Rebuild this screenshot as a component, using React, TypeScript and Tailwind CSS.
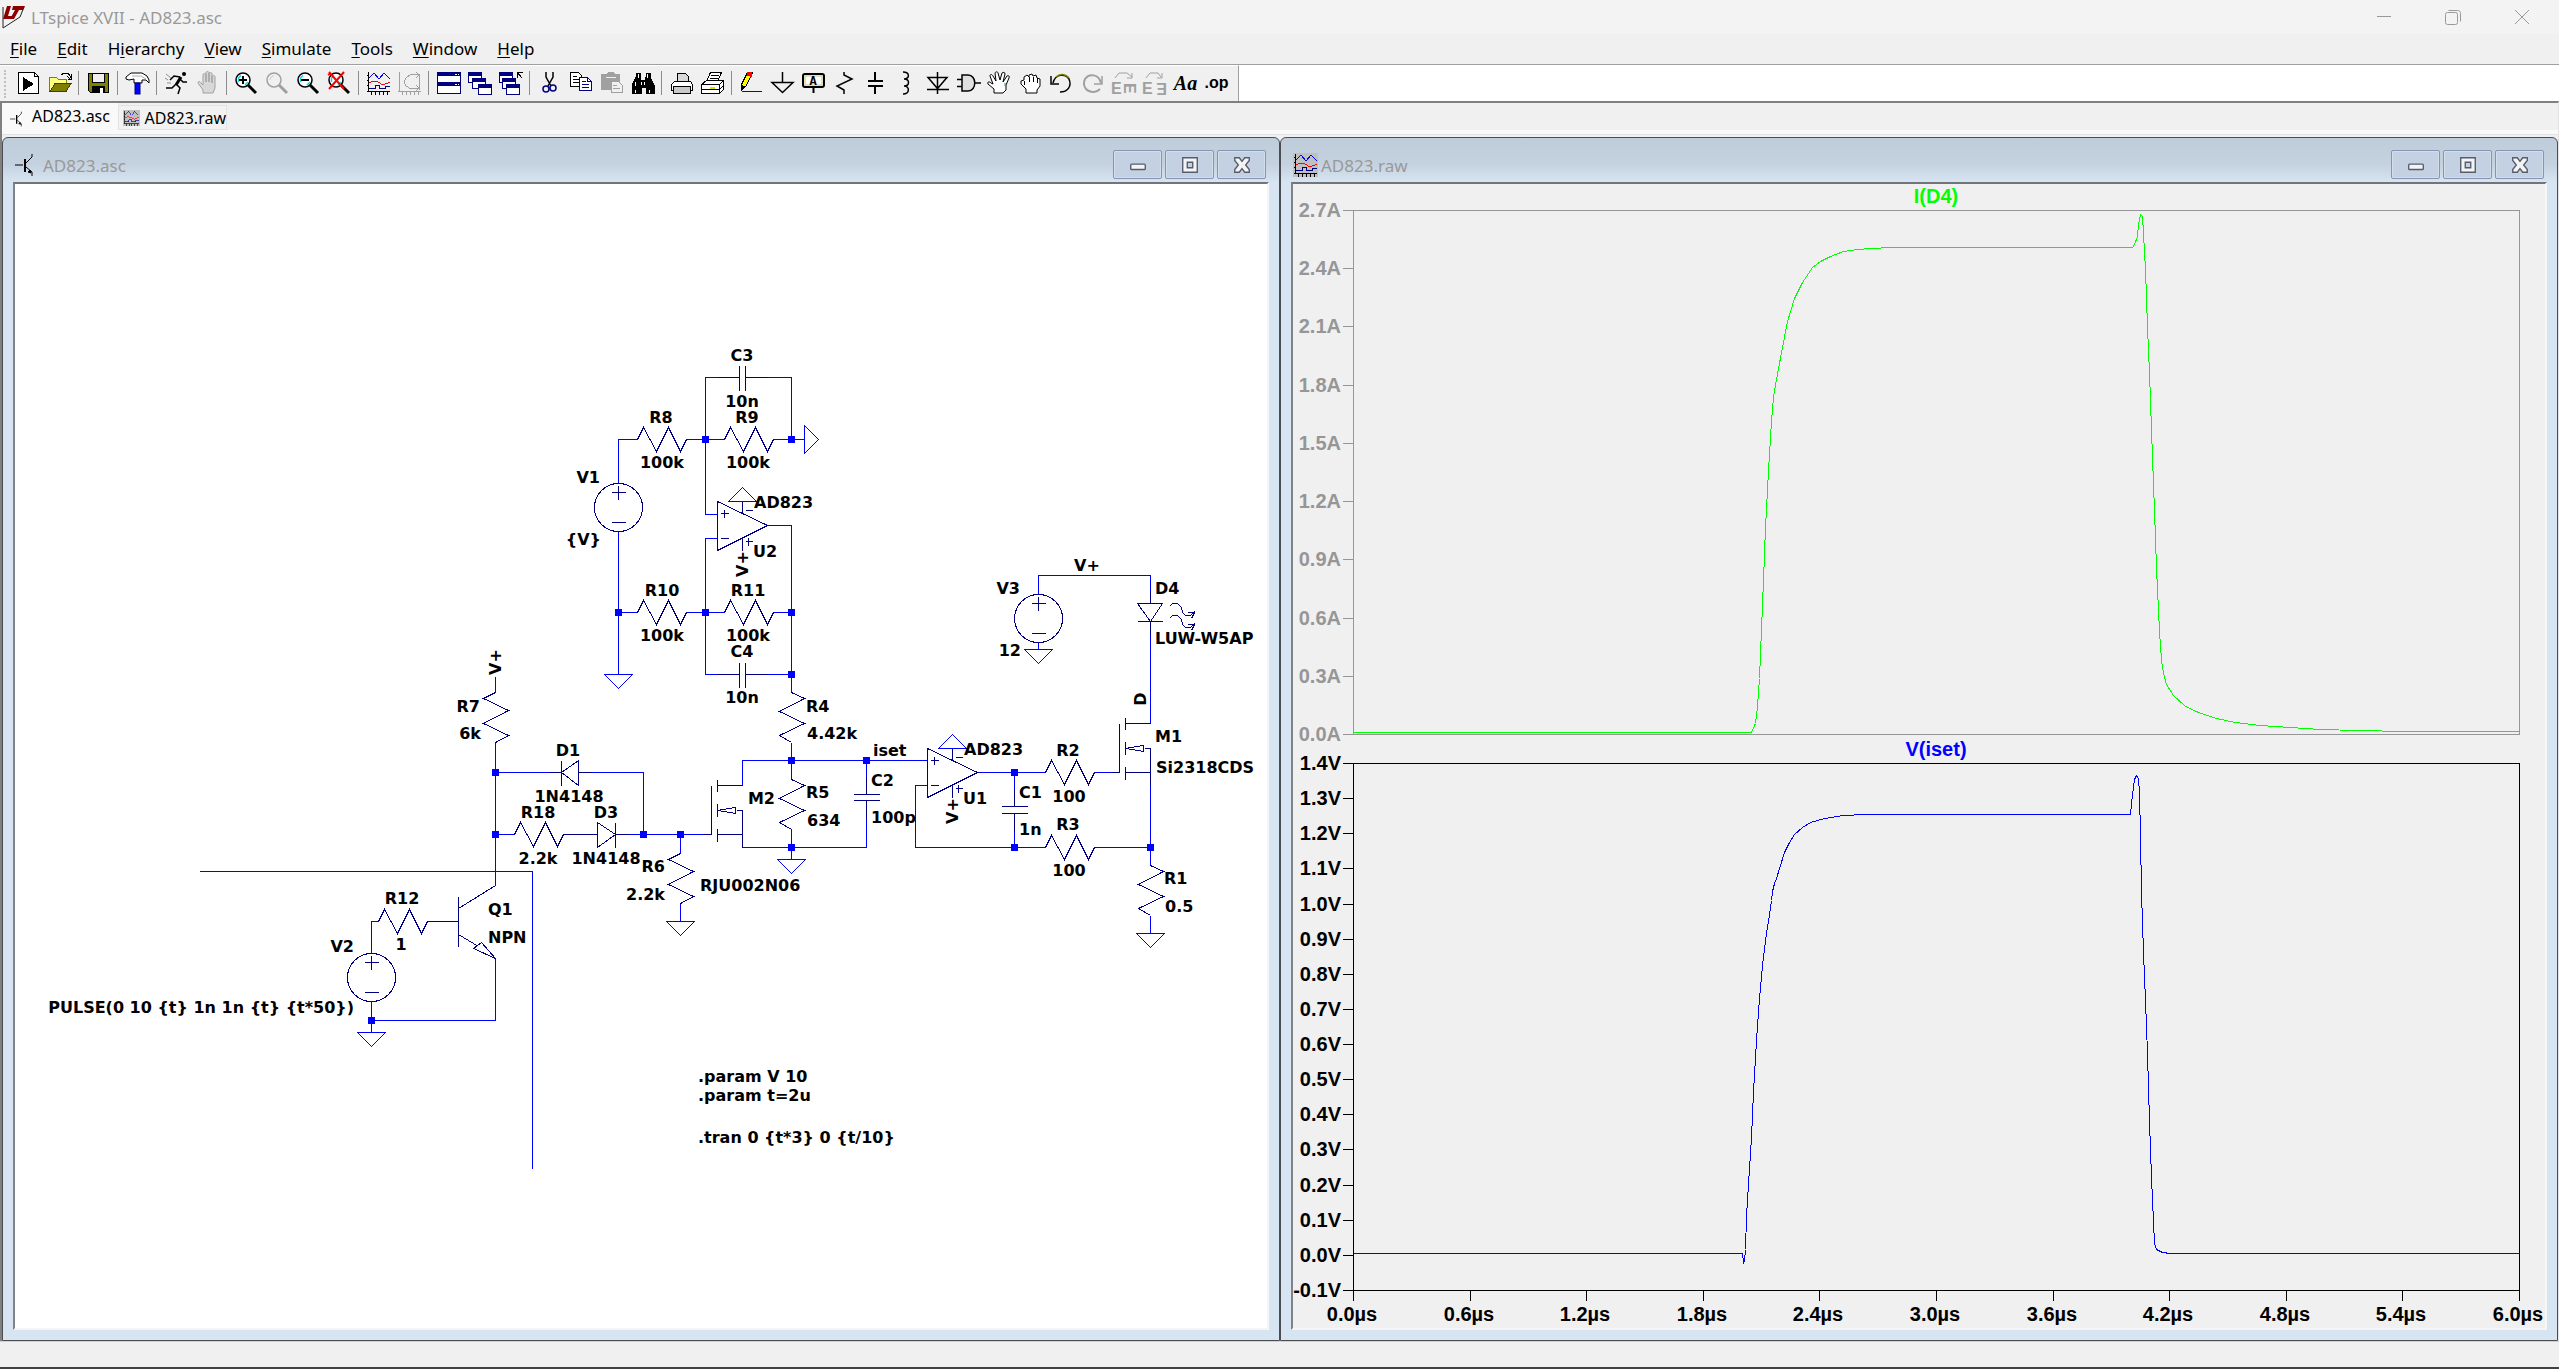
import type { ReactNode } from 'react';

const WIRE = '#0000ff';
const SYMBOL = '#000080';

interface IconProps {
  children: ReactNode;
  smooth?: boolean;
}

const Icon = ({ children, smooth }: IconProps) => (
  <svg
    viewBox="0 0 25 24"
    className="h-6 w-[25px] shrink-0 overflow-visible"
    fill="none"
    stroke="#000"
    shapeRendering={smooth ? 'auto' : 'crispEdges'}
    aria-hidden="true"
  >
    {children}
  </svg>
);

const Magnifier = ({ gray }: { gray?: boolean }) => (
  <>
    <circle cx="9" cy="9" r="7" fill={gray ? '#f0f0f0' : '#fff'} stroke={gray ? '#a0a0a0' : '#000'} strokeWidth="1.5" />
    {!gray && <path d="M4.5 11V7L7 4.5M11 14l3-3" stroke="#00e0e0" strokeWidth="1.5" />}
    {gray && <path d="M5 9c0-3 2-4 4-4" stroke="#c8c8c8" />}
    <path d="M14 14l8 8" stroke={gray ? '#a0a0a0' : '#000'} strokeWidth="3" />
  </>
);

const MiniWindow = ({ x, y }: { x: number; y: number }) => (
  <>
    <rect x={x} y={y} width="13" height="10" fill="#fff" stroke={SYMBOL} />
    <rect x={x} y={y} width="13" height="3" fill={SYMBOL} stroke={SYMBOL} />
  </>
);

const Traces = () => (
  <>
    <path d="M2.5 1v20M1 20.5h23M5.5 21v3M9.5 21v3M13.5 21v3M17.5 21v3M21.5 21v3M1 4.5h2M1 9.5h2M1 14.5h2" />
    <path d="M3 7l5-5 5 6 5-6 6 6" stroke="#0000ff" />
    <path d="M3 12l4-2 5 1 5 3 7-3" stroke="#ff0000" />
    <path d="M3 17.5h6v-3h4v3h6v-2h5" stroke="#000080" />
  </>
);

interface Tool {
  name: string;
  icon: ReactNode;
}

const toolGroups: Tool[][] = [
  [
    {
      name: 'New schematic',
      icon: (
        <Icon>
          <path d="M2.5 1.5h16l4 4v17h-20z" fill="#fff" />
          <path d="M7 6v14l11-7z" fill="#000" stroke="none" />
          <path d="M18.5 1.5v4h4" />
        </Icon>
      ),
    },
    {
      name: 'Open',
      icon: (
        <Icon>
          <path d="M2.5 20.5v-14h7l2 2h8v4" fill="#ffff80" stroke="#808000" />
          <path d="M3 20.5l5-8h16l-5 8z" fill="#808000" stroke="#404000" />
          <path d="M14 4l3-2h4l2 3v2M20 5l3 3M24 3v5h-3" />
        </Icon>
      ),
    },
  ],
  [
    {
      name: 'Save',
      icon: (
        <Icon>
          <path d="M2.5 2.5h20v19h-18l-2-2z" fill="#808000" />
          <rect x="6.5" y="2.5" width="12" height="9" fill="#f0f0f0" />
          <rect x="6" y="15" width="13" height="7" fill="#000" stroke="none" />
          <rect x="14" y="17" width="3" height="5" fill="#fff" stroke="none" />
        </Icon>
      ),
    },
  ],
  [
    {
      name: 'Control panel',
      icon: (
        <Icon smooth>
          <path d="M1 6l5-4h11l5 3 2 4v3l-3-3h-4v3H9V8L4 9 1 8z" fill="#fff" />
          <path d="M7 5h9l5 3" stroke="#b0b0b0" />
          <rect x="10" y="12" width="5" height="11" fill="#0000ff" stroke="#000080" />
        </Icon>
      ),
    },
  ],
  [
    {
      name: 'Run',
      icon: (
        <Icon smooth>
          <circle cx="20" cy="3" r="2" fill="#000" stroke="none" />
          <path d="M17 6l-5 8" strokeWidth="3" />
          <path d="M16 6l-6-1-4 4M16 8l3 3h4M12 13l-4 4H2M12 13l4 4-2 6" strokeWidth="1.5" />
          <path d="M2 3l5 4M1 7l3 2M3 12h4" stroke="#909090" />
        </Icon>
      ),
    },
    {
      name: 'Halt',
      icon: (
        <Icon smooth>
          <path
            d="M8 22v-3l-5-7c0-2 2-2 3 0l2 2V4c0-2 3-2 3 0v7-9c0-2 3-2 3 0v9-8c0-2 3-2 3 0v9-6c0-2 3-2 3 0v11l-2 5z"
            fill="#d8d8d8"
            stroke="#a0a0a0"
          />
        </Icon>
      ),
    },
  ],
  [
    {
      name: 'Zoom in',
      icon: (
        <Icon smooth>
          <Magnifier />
          <path d="M5 9h8M9 5v8" strokeWidth="2" />
        </Icon>
      ),
    },
    {
      name: 'Pan',
      icon: (
        <Icon smooth>
          <Magnifier gray />
        </Icon>
      ),
    },
    {
      name: 'Zoom back',
      icon: (
        <Icon smooth>
          <Magnifier />
          <path d="M5 9h8" strokeWidth="2" />
        </Icon>
      ),
    },
    {
      name: 'Zoom full extents',
      icon: (
        <Icon smooth>
          <Magnifier />
          <path d="M2 1l15 17M17 1L2 18M1 4l3-2" stroke="#ff0000" strokeWidth="2" />
        </Icon>
      ),
    },
  ],
  [
    { name: 'Autorange', icon: <Icon><Traces /></Icon> },
    {
      name: 'Plot settings',
      icon: (
        <Icon>
          <g stroke="#a0a0a0">
            <path d="M2.5 1v20M1 20.5h23M5.5 21v3M9.5 21v3M13.5 21v3M17.5 21v3M21.5 21v3" />
            <path d="M22 4l-8-1-5 4-2 4 2 4 5 3 8-1M19 1l3 3-3 3M19 14l3 3-3 3M22.5 3v16" />
          </g>
        </Icon>
      ),
    },
  ],
  [
    {
      name: 'Tile windows',
      icon: (
        <Icon>
          <rect x="1.5" y="1.5" width="23" height="21" fill="#fff" stroke={SYMBOL} />
          <path d="M1 3h24M1 13h24" stroke={SYMBOL} strokeWidth="4" />
          <path d="M19 3.5h4M19 13.5h4" stroke="#fff" strokeDasharray="2 1" />
        </Icon>
      ),
    },
    {
      name: 'Cascade windows',
      icon: (
        <Icon>
          <MiniWindow x={1} y={1} />
          <MiniWindow x={5} y={7} />
          <MiniWindow x={11} y={13} />
        </Icon>
      ),
    },
    {
      name: 'Close all windows',
      icon: (
        <Icon>
          <MiniWindow x={1} y={1} />
          <MiniWindow x={4} y={7} />
          <MiniWindow x={8} y={13} />
          <path d="M19.5 1.5h5M19.5 1.5v5M19 1l5 6" />
        </Icon>
      ),
    },
  ],
  [
    {
      name: 'Cut',
      icon: (
        <Icon smooth>
          <path d="M9 1v5l5 9M16 1v5l-5 9" strokeWidth="1.5" />
          <circle cx="9" cy="18" r="3" stroke={SYMBOL} strokeWidth="1.5" />
          <circle cx="16" cy="17" r="3" stroke={SYMBOL} strokeWidth="1.5" />
        </Icon>
      ),
    },
    {
      name: 'Copy',
      icon: (
        <Icon>
          <path d="M2.5 1.5h8l3 3v11h-11z" fill="#fff" />
          <path d="M5 5.5h4M5 8.5h6M5 11.5h6" />
          <path d="M11.5 6.5h8l4 4v9h-12z" fill="#fff" stroke={SYMBOL} />
          <path d="M14 10.5h4M14 13.5h7M14 16.5h7M19.5 6.5v4h4" stroke={SYMBOL} />
        </Icon>
      ),
    },
    {
      name: 'Paste',
      icon: (
        <Icon>
          <path d="M2 3h5l2-2h5l2 2h5v16H2z" fill="#a0a0a0" stroke="none" />
          <path d="M7 6h10" stroke="#f0f0f0" />
          <path d="M12.5 10.5h7l4 4v7h-11z" fill="#f0f0f0" stroke="#a0a0a0" />
          <path d="M14 14.5h4M14 17.5h7" stroke="#a0a0a0" />
        </Icon>
      ),
    },
    {
      name: 'Find',
      icon: (
        <Icon>
          <path d="M6 2h4v4l1 3h4l1-3V2h4v4l4 8v8h-8v-6h-5v6H2v-8l4-8z" fill="#000" />
          <path d="M8.5 3v4M17.5 3v4M5.5 11v4M14.5 11v3M5.5 19v3M19.5 19v3M11.5 11v3" stroke="#fff" />
        </Icon>
      ),
    },
  ],
  [
    {
      name: 'Print',
      icon: (
        <Icon>
          <path d="M8.5 2.5h8l3 3v7h-11z" fill="#d8d8d8" />
          <path d="M5.500 10.5h16l2 3v6h-21v-6z" fill="#fff" />
          <path d="M4.5 15.5h17v7h-17z" fill="#c8c8c8" />
        </Icon>
      ),
    },
    {
      name: 'Print setup',
      icon: (
        <Icon>
          <path d="M10.5 1.5h11l-4 9h-11z" fill="#fff" />
          <path d="M11 4.5h8M10 7.5h8" />
          <path d="M1.5 13.5l5-4h17v9l-4 4h-18z" fill="#fff" />
          <path d="M1.5 13.5h18v9M19.5 13.5l4-4M2 18.5h17M20 18l4-4" />
          <path d="M10 16.5h5" stroke="#e0e000" strokeWidth="2" />
        </Icon>
      ),
    },
  ],
  [
    {
      name: 'Wire',
      icon: (
        <Icon>
          <path d="M2.5 18.5v-5l6-12h5l-6 13z" fill="#ffff00" />
          <path d="M2 20v-6l4 2z" fill="#000" />
          <path d="M8.5 1.5h4v4l-4-1z" fill="#ff0000" stroke="#ff0000" />
          <path d="M3 20.5h20" stroke="#0000ff" />
        </Icon>
      ),
    },
    {
      name: 'Ground',
      icon: (
        <Icon smooth>
          <path d="M12.5 1v10M2 11.500h21l-10.5 10z" strokeWidth="1.5" />
        </Icon>
      ),
    },
    {
      name: 'Label net',
      icon: (
        <Icon smooth>
          <rect x="2" y="3" width="21" height="13" rx="2" fill="#fff" strokeWidth="2" />
          <path d="M4 5h17v9H4z" stroke="#c0c080" />
          <path d="M12.5 16v6" strokeWidth="2" />
          <text x="12" y="14" textAnchor="middle" fill="#000" stroke="none" className="font-['Liberation_Mono'] text-[12px] font-bold">
            A
          </text>
        </Icon>
      ),
    },
    {
      name: 'Resistor',
      icon: <Icon smooth><path d="M12 1v3l8 4L5 15l7 4v4" strokeWidth="1.5" /></Icon>,
    },
    {
      name: 'Capacitor',
      icon: <Icon><path d="M12 1v9M12 15v8M5 10h15M5 15h15" strokeWidth="2" /></Icon>,
    },
    {
      name: 'Inductor',
      icon: <Icon smooth><path d="M9 1c7 0 7 7 1 7 6 0 6 7 0 7 6 0 6 8-1 8" strokeWidth="1.5" /></Icon>,
    },
    {
      name: 'Diode',
      icon: <Icon smooth><path d="M12.5 1v22M3 6.5h19l-9.5 11zM2 18.5h22" strokeWidth="1.5" /></Icon>,
    },
    {
      name: 'Component',
      icon: (
        <Icon smooth>
          <path d="M6 4h6c9 0 9 16 0 16H6zM1 8.5h5M1 15.5h5M19 12h6" fill="#e0e0e0" strokeWidth="1.5" />
        </Icon>
      ),
    },
    {
      name: 'Move',
      icon: (
        <Icon smooth>
          <path
            d="M7 22v-4l-6-5c-1-2 1-3 3-1l2 1-3-8c0-2 2-2 3 0l3 5-1-8c1-2 3-1 3 0l2 7 2-7c1-1 3-1 3 1l-2 8 4-6c1-1 3 0 2 2l-3 7v5l-3 3z"
            fill="#fff"
          />
          <path d="M18 12v3" stroke="#00a0a0" />
        </Icon>
      ),
    },
    {
      name: 'Drag',
      icon: (
        <Icon smooth>
          <path
            d="M8 22v-4l-5-5v-3l3-1V6l3-2 2 2V4l3-1 1 2 3-1 1 3 3 1v7l-3 4v3z"
            fill="#fff"
          />
          <path d="M6.5 10v4M11.5 6v5M15.5 6v5M19.5 7v5" />
        </Icon>
      ),
    },
    {
      name: 'Undo',
      icon: (
        <Icon smooth>
          <path d="M4 12C6 3 16 2 20 8c3 7-1 13-9 13" strokeWidth="1.500" />
          <path d="M7 6c4-4 10-3 13 1" stroke="#808000" strokeWidth="1.500" />
          <path d="M2 5v8h8" strokeWidth="1.500" />
        </Icon>
      ),
    },
    {
      name: 'Redo',
      icon: (
        <Icon smooth>
          <path d="M21 12C19 3 9 2 5 8c-3 7 1 13 9 13 3 0 5-2 6-3" stroke="#a0a0a0" strokeWidth="2" />
          <path d="M22 5v8h-8" stroke="#a0a0a0" strokeWidth="1.500" />
        </Icon>
      ),
    },
    {
      name: 'Rotate',
      icon: (
        <Icon smooth>
          <path d="M4 7l4-5h8l5 4M21 2v5h-5" stroke="#a0a0a0" />
          <g fill="#a0a0a0" stroke="none" className="font-['Liberation_Sans'] text-[16px] font-bold">
            <text x="0" y="23">E</text>
            <text transform="translate(13 12) rotate(90)">E</text>
          </g>
        </Icon>
      ),
    },
    {
      name: 'Mirror',
      icon: (
        <Icon smooth>
          <path d="M4 7l4-5h8l3 4M20 2v5h-5" stroke="#a0a0a0" />
          <g fill="#a0a0a0" stroke="none" className="font-['Liberation_Sans'] text-[16px] font-bold">
            <text x="0" y="23">E</text>
            <text transform="translate(25 12) rotate(180)">E</text>
          </g>
        </Icon>
      ),
    },
    {
      name: 'Text',
      icon: <span className="font-['Liberation_Serif'] text-[20px] leading-6 font-bold italic">Aa</span>,
    },
    {
      name: 'SPICE directive',
      icon: <span className="font-['Liberation_Sans'] text-[16px] leading-5 font-bold">.op</span>,
    },
  ],
];

const menus = [
  ['', 'F', 'ile'],
  ['', 'E', 'dit'],
  ['H', 'i', 'erarchy'],
  ['', 'V', 'iew'],
  ['', 'S', 'imulate'],
  ['', 'T', 'ools'],
  ['', 'W', 'indow'],
  ['', 'H', 'elp'],
];

const SchematicIcon = ({ className }: { className: string }) => (
  <svg viewBox="0 0 18 24" className={className} fill="none" stroke="#000" aria-hidden="true">
    <path d="M0 12h8M17 1v3l-6 6M11 14l6 5v4" />
    <path d="M10 6v13" strokeWidth="2" />
    <path d="M16 20l-3-1 2-2z" fill="#000" />
  </svg>
);

const WaveIcon = ({ className }: { className: string }) => (
  <svg viewBox="0 0 25 24" className={className} fill="none" stroke="#000" shapeRendering="crispEdges" aria-hidden="true">
    <rect width="25" height="24" fill="#c0c0c0" stroke="none" />
    <Traces />
  </svg>
);

// ---- schematic symbols ----

type Pt = { x: number; y: number };

// zigzag body only, the leads are drawn as wires
const ResH = ({ x, y }: Pt) => (
  <path d={`M${x} ${y}l6 -12l13 24l12 -24l12 24l6 -12`} stroke={SYMBOL} />
);

const ResV = ({ x, y, flip }: Pt & { flip?: boolean }) => (
  <path
    d={
      flip
        ? `M${x} ${y}l-12 6l25 12l-25 13l25 12l-13 7`
        : `M${x} ${y}l13 6l-25 13l25 12l-25 12l12 7`
    }
    stroke={SYMBOL}
  />
);

const CapV = ({ x, y, gap = 6 }: Pt & { gap?: number }) => (
  <path d={`M${x - 13} ${y}h26M${x - 13} ${y + gap}h26M${x} ${y}v-18M${x} ${y + gap}v18`} stroke={SYMBOL} />
);

const CapH = ({ x, y }: Pt) => (
  <path d={`M${x} ${y - 12}v25M${x + 6} ${y - 12}v25M${x} ${y}h-22M${x + 6} ${y}h22`} stroke={SYMBOL} />
);

const Gnd = ({ x, y }: Pt) => <path d={`M${x - 14} ${y}h28l-14 14z`} stroke={WIRE} />;

const Source = ({ x, y }: Pt) => (
  <g stroke={SYMBOL}>
    <circle cx={x} cy={y} r="24" />
    <path d={`M${x} ${y - 22}v14M${x - 7} ${y - 15}h14M${x - 7} ${y + 15}h14`} />
  </g>
);

const OpAmp = ({ x, y }: Pt) => (
  <g stroke={SYMBOL}>
    <path d={`M${x} ${y - 24}v49l50 -25z`} />
    <path d={`M${x + 3} ${y - 12}h8M${x + 7} ${y - 16}v8M${x + 3} ${y + 13}h8`} />
    <path d={`M${x + 25} ${y - 24}v12M${x + 25} ${y + 13}v12M${x + 28} ${y - 15}h7M${x + 28} ${y + 16}h7M${x + 31} ${y + 12}v8`} />
    <path d={`M${x + 11} ${y - 24}h28l-14 -14z`} stroke={WIRE} />
  </g>
);

// x, y is the top of the gate bar
const Mosfet = ({ x, y }: Pt) => (
  <g stroke={SYMBOL}>
    <path d={`M${x} ${y}v49M${x + 6} ${y - 6}v12M${x + 6} ${y + 18}v13M${x + 6} ${y + 43}v13`} />
    <path d={`M${x + 6} ${y}h25M${x + 6} ${y + 49}h25`} />
    <path d={`M${x + 6} ${y + 25}l18 -3v6zM${x + 25} ${y + 25}h6v37M${x} ${y + 49}h-8`} />
  </g>
);

const wires = [
  'M637 439H618V483M618 531V674M618 612H637M686 612H724M773 612H791',
  'M686 439H724M773 439H804M705 514V377H718M767 377H791V439M705 514H717',
  'M717 538H705V674H718M767 674H791M767 525H791V692M791 742V779M791 828V859',
  'M742 785V760H927M866 760V776M866 818V847H742V834',
  'M977 772H1045M1014 772V788M1014 831V847M1094 772H1112M927 785H915V847H1045M1094 847H1150',
  'M1150 785V865M1150 915V933M1150 723V621M1150 603V575H1038V594M1038 642V649',
  'M495 676V692M495 742V885M495 772H548M591 772H643V834M495 834H514M615 834H703M680 834V853M680 902V921',
  'M199 871H532V1168M378 921H371V953M371 1001V1032M371 1020H495V958',
];

const nodes = [
  [705, 439], [791, 439], [618, 612], [705, 612], [791, 612], [791, 674],
  [791, 760], [866, 760], [791, 847], [1014, 772], [1014, 847], [1150, 847],
  [495, 772], [495, 834], [643, 834], [680, 834], [371, 1020],
];

type Anchor = 'start' | 'middle' | 'end';

const labels: [string, number, number, Anchor][] = [
  ['C3', 742, 361, 'middle'],
  ['10n', 742, 407, 'middle'],
  ['R8', 661, 423, 'middle'],
  ['R9', 747, 423, 'middle'],
  ['100k', 662, 468, 'middle'],
  ['100k', 748, 468, 'middle'],
  ['V1', 600, 483, 'end'],
  ['{V}', 601, 545, 'end'],
  ['AD823', 754, 508, 'start'],
  ['U2', 753, 557, 'start'],
  ['R10', 662, 596, 'middle'],
  ['R11', 748, 596, 'middle'],
  ['100k', 662, 641, 'middle'],
  ['100k', 748, 641, 'middle'],
  ['C4', 742, 657, 'middle'],
  ['10n', 742, 703, 'middle'],
  ['R4', 806, 712, 'start'],
  ['4.42k', 807, 739, 'start'],
  ['R5', 806, 798, 'start'],
  ['634', 807, 826, 'start'],
  ['M2', 775, 804, 'end'],
  ['RJU002N06', 700, 891, 'start'],
  ['iset', 873, 756, 'start'],
  ['C2', 871, 786, 'start'],
  ['100p', 871, 823, 'start'],
  ['AD823', 964, 755, 'start'],
  ['U1', 963, 804, 'start'],
  ['C1', 1019, 798, 'start'],
  ['1n', 1019, 835, 'start'],
  ['R2', 1068, 756, 'middle'],
  ['100', 1069, 802, 'middle'],
  ['R3', 1068, 830, 'middle'],
  ['100', 1069, 876, 'middle'],
  ['V3', 1020, 594, 'end'],
  ['12', 1021, 656, 'end'],
  ['V+', 1087, 571, 'middle'],
  ['D4', 1155, 594, 'start'],
  ['LUW-W5AP', 1155, 644, 'start'],
  ['M1', 1155, 742, 'start'],
  ['Si2318CDS', 1156, 773, 'start'],
  ['R1', 1164, 884, 'start'],
  ['0.5', 1165, 912, 'start'],
  ['R7', 480, 712, 'end'],
  ['6k', 481, 739, 'end'],
  ['D1', 568, 756, 'middle'],
  ['1N4148', 569, 802, 'middle'],
  ['R18', 538, 818, 'middle'],
  ['D3', 606, 818, 'middle'],
  ['2.2k', 538, 864, 'middle'],
  ['1N4148', 606, 864, 'middle'],
  ['R6', 665, 872, 'end'],
  ['2.2k', 665, 900, 'end'],
  ['R12', 402, 904, 'middle'],
  ['1', 401, 950, 'middle'],
  ['Q1', 488, 915, 'start'],
  ['NPN', 488, 943, 'start'],
  ['V2', 354, 952, 'end'],
  ['PULSE(0 10 {t} 1n 1n {t} {t*50})', 354, 1013, 'end'],
  ['.param V 10', 698, 1082, 'start'],
  ['.param t=2u', 698, 1101, 'start'],
  ['.tran 0 {t*3} 0 {t/10}', 698, 1143, 'start'],
];

const verticalLabels: [string, number, number][] = [
  ['V+', 748, 564],
  ['V+', 958, 811],
  ['V+', 501, 662],
  ['D', 1146, 699],
];

const Schematic = () => (
  <svg viewBox="15 184 1252 1144" className="block h-auto w-full bg-white" role="img" aria-label="AD823 LED driver schematic">
    <g transform="translate(0.5 0.5)" fill="none" shapeRendering="crispEdges">
      {wires.map((d) => (
        <path key={d} d={d} stroke={WIRE} />
      ))}

      <ResH x={637} y={439} />
      <ResH x={724} y={439} />
      <ResH x={637} y={612} />
      <ResH x={724} y={612} />
      <ResH x={1045} y={772} />
      <ResH x={1045} y={847} />
      <ResH x={514} y={834} />
      <ResH x={378} y={921} />
      <ResV x={791} y={692} />
      <ResV x={791} y={779} />
      <ResV x={1150} y={865} />
      <ResV x={495} y={692} flip />
      <ResV x={680} y={853} flip />

      <CapH x={739} y={377} />
      <CapH x={739} y={674} />
      <CapV x={866} y={794} />
      <CapV x={1014} y={806} gap={7} />

      <Source x={618} y={507} />
      <Source x={1038} y={618} />
      <Source x={371} y={977} />

      <Gnd x={618} y={674} />
      <Gnd x={791} y={859} />
      <Gnd x={680} y={921} />
      <Gnd x={1150} y={933} />
      <Gnd x={1038} y={649} />
      <Gnd x={371} y={1032} />
      <path d="M804 425v28l14 -14z" stroke={WIRE} />

      <OpAmp x={717} y={525} />
      <OpAmp x={927} y={772} />
      <Mosfet x={711} y={785} />
      <Mosfet x={1119} y={723} />

      {/* diodes D1, D3 and the led D4 */}
      <g stroke={SYMBOL}>
        <path d="M548 772H561M561 760V785M561 772L578 760V785ZM578 772H591" />
        <path d="M563 834H597M597 822V847L615 834ZM615 822V847M615 834H628" />
        <path d="M1137 603H1162L1150 621ZM1137 621H1162M1150 590V603M1150 621V634" />
        <path d="M1169 606l3 -3h5l4 4l1 5l3 3h5l4 -4M1187 612h7l-3 6" />
        <path d="M1169 618l3 -3h5l4 4l1 5l3 3h5l4 -4M1187 624h7l-3 6" />
      </g>

      {/* Q1 */}
      <g stroke={SYMBOL}>
        <path d="M427 921H458M458 896V946M495 885L458 908M458 934L478 946" />
        <path d="M473 948L481 942L495 958Z" />
      </g>

      {nodes.map(([x, y]) => (
        <rect key={`${x}-${y}`} x={x - 3} y={y - 3} width="6" height="6" fill={WIRE} stroke={WIRE} />
      ))}
    </g>

    <g className="font-['DejaVu_Sans',sans-serif] text-[16px] font-bold" fill="#000">
      {labels.map(([text, x, y, anchor]) => (
        <text key={`${x}-${y}`} x={x} y={y} textAnchor={anchor}>
          {text}
        </text>
      ))}
      {verticalLabels.map(([text, x, y]) => (
        <text key={`${x}-${y}`} transform={`translate(${x} ${y}) rotate(-90)`} textAnchor="middle">
          {text}
        </text>
      ))}
    </g>
  </svg>
);

// ---- waveform viewer ----

const LEFT = 1353;
const RIGHT = 2519;

const currentTicks = ['2.7A', '2.4A', '2.1A', '1.8A', '1.5A', '1.2A', '0.9A', '0.6A', '0.3A', '0.0A'];
const voltageTicks = [
  '1.4V', '1.3V', '1.2V', '1.1V', '1.0V', '0.9V', '0.8V', '0.7V',
  '0.6V', '0.5V', '0.4V', '0.3V', '0.2V', '0.1V', '0.0V', '-0.1V',
];
const timeTicks = ['0.0µs', '0.6µs', '1.2µs', '1.8µs', '2.4µs', '3.0µs', '3.6µs', '4.2µs', '4.8µs', '5.4µs', '6.0µs'];

const currentTrace =
  '1353,732 1751,732 1755,723 1757,706 1759,678 1761,629 1763,580 1765,527 1768,470 1771,421 1773,396 1778,368 ' +
  '1782,347 1787,321 1794,298 1802,282 1812,267 1820,261 1830,256 1843,251 1857,249 1870,248 1891,247 2132,247 ' +
  '2134,244 2137,236 2138,224 2140,214 2142,216 2143,233 2145,269 2147,327 2149,372 2151,430 2154,510 2156,568 ' +
  '2159,631 2161,660 2163,673 2166,684 2173,695 2185,706 2198,712 2216,718 2235,722 2260,725 2290,727 2320,729 ' +
  '2357,730 2405,731 2519,731';

const voltageTrace =
  '1353,1253 1742,1253 1743,1262 1744,1260 1745,1249 1746,1216 1748,1184 1751,1137 1753,1091 1756,1040 1759,998 ' +
  '1762,965 1766,933 1769,914 1771,900 1772,891 1774,883 1776,878 1779,868 1784,852 1789,842 1794,834 1802,827 ' +
  '1810,822 1824,818 1843,815 1864,814 2130,814 2132,794 2134,779 2136,775 2138,778 2139,792 2140,836 2141,892 ' +
  '2143,952 2145,1000 2147,1053 2149,1121 2151,1177 2153,1221 2154,1243 2156,1249 2162,1252 2170,1253 2519,1253';

interface PaneProps {
  title: string;
  color: string;
  axis: string;
  top: number;
  bottom: number;
  ticks: string[];
  trace: string;
}

const Pane = ({ title, color, axis, top, bottom, ticks, trace }: PaneProps) => {
  const step = (bottom - top) / (ticks.length - 1);

  return (
    <g>
      <g transform="translate(0.5 0.5)" fill="none" shapeRendering="crispEdges">
        <rect x={LEFT} y={top} width={RIGHT - LEFT} height={bottom - top} stroke={axis} />
        {ticks.map((tick, i) => (
          <path key={tick} d={`M${LEFT} ${Math.round(top + i * step)}h-11`} stroke={axis} />
        ))}
        <polyline points={trace} stroke={color} />
      </g>
      {ticks.map((tick, i) => (
        <text key={tick} x="1341" y={Math.round(top + i * step) + 7} textAnchor="end" fill={axis}>
          {tick}
        </text>
      ))}
      <text x="1936" y={top - 7} textAnchor="middle" fill={color}>
        {title}
      </text>
    </g>
  );
};

const Waveforms = () => (
  <svg
    viewBox="1293 184 1252 1144"
    className="block h-auto w-full bg-[#f0f0f0] font-['Liberation_Sans',Arial,sans-serif] text-[20px] font-bold"
    role="img"
    aria-label="Waveforms of I(D4) and V(iset)"
  >
    <Pane title="I(D4)" color="#00ff00" axis="#969696" top={210} bottom={734} ticks={currentTicks} trace={currentTrace} />
    <Pane title="V(iset)" color="#0000ff" axis="#000000" top={763} bottom={1290} ticks={voltageTicks} trace={voltageTrace} />
    {timeTicks.map((tick, i) => {
      const x = Math.round(LEFT + (i * (RIGHT - LEFT)) / 10);
      return (
        <g key={tick}>
          <rect x={x} y="1290" width="1" height="11" fill="#000" />
          <text x={x - 1} y="1321" textAnchor="middle" fill="#000">
            {tick}
          </text>
        </g>
      );
    })}
  </svg>
);

const childButtons = [
  { name: 'Minimize', shape: <rect x="3" y="10" width="16" height="6" rx="1" /> },
  {
    name: 'Maximize',
    shape: <path fillRule="evenodd" d="M3 3h16v16h-16zM8 8v6h6v-6z" />,
  },
  {
    name: 'Close',
    shape: <path d="M3 3h5l3 4l3 -4h5v3l-4 5l4 5v3h-5l-3 -4l-3 4h-5v-3l4 -5l-4 -5z" />,
  },
];

interface ChildWindowProps {
  title: string;
  icon: ReactNode;
  children: ReactNode;
}

const ChildWindow = ({ title, icon, children }: ChildWindowProps) => (
  <section className="flex min-w-0 flex-col rounded-t-md border border-[#4a4d52] bg-[#d7e4f2] bg-linear-to-b from-[#bfcddb] from-0% via-[#c4d1df] via-[26px] to-[#d7e4f2] to-[44px] px-[10px] pb-[10px]">
    <header className="flex h-11 items-center pt-[9px]">
      {icon}
      <h2 className="pt-[2px] font-['Noto_Sans',sans-serif] text-[17px] text-[#999]">{title}</h2>
      <div className="ml-auto flex gap-[3px] pr-[3px]">
        {childButtons.map(({ name, shape }) => (
          <button
            key={name}
            aria-label={`${name} ${title}`}
            className="flex h-[29px] w-[49px] items-center justify-center rounded-xs border border-[#8496b4] bg-[#c3d1e2] shadow-[inset_0_0_0_1px_#d3deeb]"
          >
            <svg viewBox="0 0 22 22" className="size-5" fill="#f4f4f4" stroke="#565c6c" strokeWidth="1.500" aria-hidden="true">
              {shape}
            </svg>
          </button>
        ))}
      </div>
    </header>
    <div className="border-2 border-t-[#72757a] border-r-[#f6f6f6] border-b-[#f6f6f6] border-l-[#808388]">{children}</div>
  </section>
);

export default function App() {
  return (
    <div className="flex min-h-screen flex-col bg-[#f0f0f0] font-['Noto_Sans',sans-serif] text-[17px] text-black">
      {/* Title bar */}
      <header className="flex h-[34px] items-center bg-[#f3f3f3] pr-[3px] text-[#999]">
        <svg viewBox="0 0 24 26" className="ml-[2px] h-[26px] w-6" aria-hidden="true">
          <path d="M1 3v21l17-11l4-10" fill="none" stroke="#222" />
          <path d="M5 2h4l-3 10h5l-1 3H1zM11 2h12l-2 4h-4l-5 9H8l5-9h-3z" fill="#8b0000" />
        </svg>
        <h1 className="ml-[5px] pt-px">LTspice XVII - AD823.asc</h1>
        <div className="ml-auto flex h-full">
          <button aria-label="Minimize" className="flex w-[69px] items-center justify-center">
            <svg viewBox="0 0 16 16" className="size-4" stroke="#999" fill="none">
              <path d="M1 7.5h14" />
            </svg>
          </button>
          <button aria-label="Restore" className="flex w-[69px] items-center justify-center">
            <svg viewBox="0 0 16 16" className="size-4" stroke="#999" fill="none">
              <rect x="0.5" y="3.5" width="12" height="12" rx="2" />
              <path d="M3.5 1.5h9c2 0 3 1 3 3v8" />
            </svg>
          </button>
          <button aria-label="Close" className="flex w-[69px] items-center justify-center">
            <svg viewBox="0 0 16 16" className="size-4" stroke="#999" fill="none">
              <path d="M1 1l14 14M15 1L1 15" />
            </svg>
          </button>
        </div>
      </header>

      {/* Menu */}
      <nav className="flex h-[31px] items-center border-b border-[#a0a0a0]">
        {menus.map(([before, key, after]) => (
          <button key={before + key + after} className="px-[10px]">
            {before}
            <u className="underline-offset-2">{key}</u>
            {after}
          </button>
        ))}
      </nav>

      {/* Toolbar */}
      <div className="flex h-9 bg-white" role="toolbar" aria-label="Main toolbar">
        <div className="flex items-start border-t border-r border-t-white border-r-[#a0a0a0] bg-[#f0f0f0] pr-[6px]">
          <div className="mx-1 mt-1 h-7 w-[5px] border-l-2 border-dotted border-[#c0c0c0]" />
          {toolGroups.map((group, i) => (
            <div key={group[0].name} className="flex items-center">
              {i > 0 && <div className="mr-1 ml-[3px] h-6 w-px bg-[#8c8c8c]" />}
              {group.map((tool) => (
                <button key={tool.name} aria-label={tool.name} title={tool.name} className="flex h-[34px] w-[31px] items-center justify-center">
                  {tool.icon}
                </button>
              ))}
            </div>
          ))}
        </div>
      </div>

      {/* Documents */}
      <div className="flex flex-1 flex-col border-t-2 border-r border-l-2 border-t-[#808080] border-r-[#e3e3e3] border-l-[#808080]">
        <div className="flex h-[31px] items-start border-b-4 border-[#f9f9f9] text-[16px]" role="tablist">
          <button role="tab" aria-selected="true" className="flex h-[31px] w-[116px] items-center bg-[#f9f9f9] pl-2">
            <SchematicIcon className="mr-[10px] h-4 w-3" />
            <span className="pb-[5px]">AD823.asc</span>
          </button>
          <button role="tab" aria-selected="false" className="mt-[2px] flex h-[25px] w-[109px] items-center border border-[#e3e3e3] bg-[#f2f2f2] pl-1">
            <WaveIcon className="mr-[5px] h-4 w-[17px]" />
            AD823.raw
          </button>
        </div>

        <main className="grid flex-1 grid-cols-2 border-t border-[#e3e3e3] pt-[2px]">
          <ChildWindow title="AD823.asc" icon={<SchematicIcon className="mr-[10px] ml-[2px] h-6 w-[18px]" />}>
            <Schematic />
          </ChildWindow>
          <ChildWindow title="AD823.raw" icon={<WaveIcon className="mr-[3px] ml-[2px] h-6 w-[25px]" />}>
            <Waveforms />
          </ChildWindow>
        </main>
      </div>

      {/* Status bar */}
      <footer className="h-7 border-t border-b-2 border-t-[#d0d0d0] border-b-[#404040]" />
    </div>
  );
}
